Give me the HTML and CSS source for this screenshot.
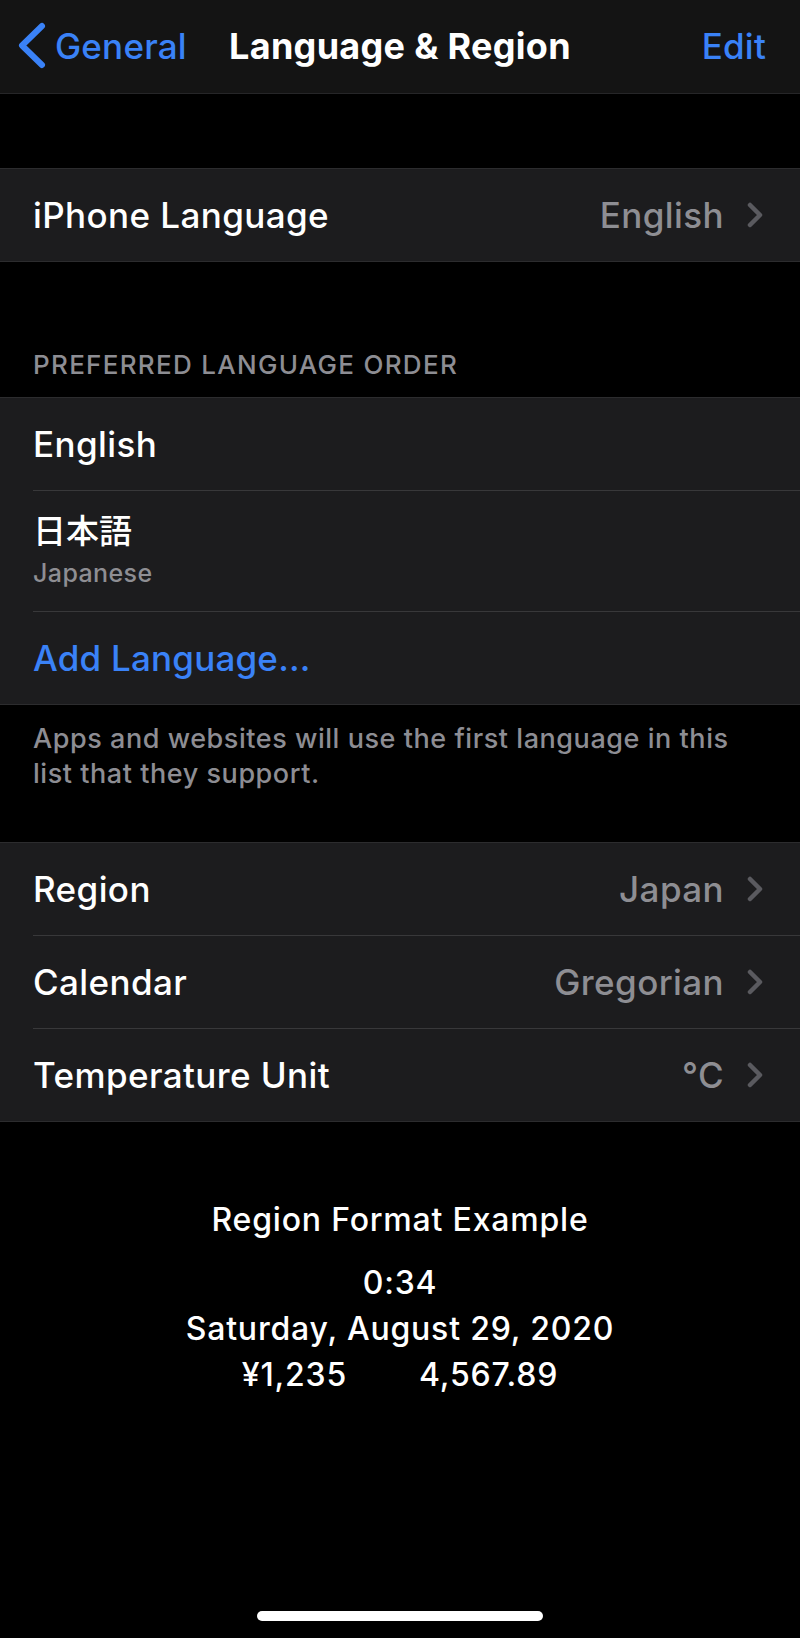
FILE: index.html
```html
<!DOCTYPE html>
<html lang="en">
<head>
<meta charset="utf-8">
<title>Language &amp; Region</title>
<link rel="stylesheet" href="styles.css">
</head>
<body>
<div class="screen">
  <header class="navbar">
    <div class="nav-back">
      <svg class="back-chev" width="30" height="50" viewBox="0 0 30 50"><polyline points="25,5 5,24.5 25,44" fill="none" stroke="#3a82f7" stroke-width="6" stroke-linecap="round" stroke-linejoin="round"/></svg>
      <span class="nav-link">General</span>
    </div>
    <div class="nav-title">Language &amp; Region</div>
    <div class="nav-right"><span class="nav-link">Edit</span></div>
  </header>

  <div class="spacer-top"></div>

  <section class="group">
    <div class="row">
      <span class="label">iPhone Language</span>
      <span class="value">English</span>
      <svg class="chev" width="16" height="26" viewBox="0 0 16 26"><polyline points="3,3 13,13 3,23" fill="none" stroke="#5a5a5f" stroke-width="4.5" stroke-linecap="round" stroke-linejoin="round"/></svg>
    </div>
  </section>

  <div class="section-header">PREFERRED LANGUAGE ORDER</div>

  <section class="group">
    <div class="row"><span class="label">English</span></div>
    <div class="row row-tall">
      <div class="stack">
        <span class="label cjk">日本語</span>
        <span class="sublabel">Japanese</span>
      </div>
    </div>
    <div class="row row-add"><span class="label link">Add Language...</span></div>
  </section>

  <div class="section-footer">Apps and websites will use the first language in this list that they support.</div>

  <section class="group">
    <div class="row">
      <span class="label">Region</span>
      <span class="value">Japan</span>
      <svg class="chev" width="16" height="26" viewBox="0 0 16 26"><polyline points="3,3 13,13 3,23" fill="none" stroke="#5a5a5f" stroke-width="4.5" stroke-linecap="round" stroke-linejoin="round"/></svg>
    </div>
    <div class="row">
      <span class="label">Calendar</span>
      <span class="value">Gregorian</span>
      <svg class="chev" width="16" height="26" viewBox="0 0 16 26"><polyline points="3,3 13,13 3,23" fill="none" stroke="#5a5a5f" stroke-width="4.5" stroke-linecap="round" stroke-linejoin="round"/></svg>
    </div>
    <div class="row">
      <span class="label">Temperature Unit</span>
      <span class="value">°C</span>
      <svg class="chev" width="16" height="26" viewBox="0 0 16 26"><polyline points="3,3 13,13 3,23" fill="none" stroke="#5a5a5f" stroke-width="4.5" stroke-linecap="round" stroke-linejoin="round"/></svg>
    </div>
  </section>

  <div class="example">
    <div class="example-title">Region Format Example</div>
    <div class="example-line ex-time">0:34</div>
    <div class="example-line">Saturday, August 29, 2020</div>
    <div class="example-line ex-money"><span>¥1,235</span><span>4,567.89</span></div>
  </div>

  <div class="home-area"><div class="home-indicator"></div></div>
</div>
</body>
</html>
```

FILE: styles.css
```css
* { box-sizing: border-box; }
html, body {
  margin: 0;
  padding: 0;
  background: #000;
}
body {
  font-family: Inter, "Noto Sans", "Noto Sans CJK JP", sans-serif;
  color: #fff;
}
.screen {
  width: 800px;
  height: 1638px;
  display: flex;
  flex-direction: column;
  background: #000;
}
.navbar {
  height: 94px;
  background: #141414;
  border-bottom: 1px solid #262628;
  display: grid;
  grid-template-columns: 1fr auto 1fr;
  align-items: center;
  padding-bottom: 1px;
}
.nav-back {
  display: flex;
  align-items: center;
  padding-left: 17px;
  gap: 8px;
}
.back-chev { display: block; }
.nav-link {
  color: #3a82f7;
  font-size: 35px;
  font-weight: 500;
  letter-spacing: 0.2px;
}
.nav-title {
  font-size: 36px;
  font-weight: 700;
  letter-spacing: 0.3px;
}
.nav-right {
  display: flex;
  justify-content: flex-end;
  padding-right: 34px;
}
.spacer-top { height: 74px; }
.group {
  background: #1c1c1e;
  border-top: 1px solid #2c2c2e;
  border-bottom: 1px solid #2c2c2e;
}
.row {
  height: 93px;
  display: flex;
  align-items: center;
  margin-left: 33px;
  padding-right: 37px;
  border-top: 1px solid #38383a;
}
.row:first-child { border-top: none; height: 92px; }
.row-tall { height: 121px; padding-bottom: 4px; }
.row-add { height: 93px; }
.label {
  font-size: 35px;
  font-weight: 500;
  letter-spacing: 0.4px;
  flex: 1;
}
.label.link { color: #3a82f7; letter-spacing: 0.2px; }
.stack {
  display: flex;
  flex-direction: column;
}
.cjk {
  font-family: "Noto Sans CJK JP", sans-serif;
  font-size: 33px;
  font-weight: 500;
  letter-spacing: 0;
  line-height: 40px;
  margin-bottom: 8px;
}
.sublabel {
  color: #8e8e93;
  font-size: 25px;
  font-weight: 500;
  letter-spacing: 0.4px;
  line-height: 32px;
}
.value {
  color: #8e8e93;
  font-size: 35px;
  font-weight: 500;
  letter-spacing: 0.4px;
  margin-right: 23px;
}
.chev { display: block; }
.section-header {
  height: 135px;
  display: flex;
  align-items: flex-end;
  padding: 0 33px 16px;
  color: #8d8d93;
  font-size: 26px;
  font-weight: 500;
  letter-spacing: 1.3px;
  line-height: 32px;
}
.section-footer {
  height: 137px;
  padding: 16px 60px 0 33px;
  color: #8d8d93;
  font-size: 27px;
  font-weight: 500;
  letter-spacing: 0.55px;
  line-height: 35px;
}
.example {
  display: flex;
  flex-direction: column;
  align-items: center;
  padding-top: 80px;
}
.example-title {
  font-size: 32px;
  font-weight: 500;
  letter-spacing: 0.8px;
  line-height: 36px;
  margin-bottom: 22px;
}
.example-line {
  font-size: 32px;
  font-weight: 500;
  letter-spacing: 0.8px;
  line-height: 46px;
}
.ex-money {
  display: flex;
  gap: 72px;
}
.home-area {
  flex: 1;
  display: flex;
  align-items: flex-end;
  justify-content: center;
  padding-bottom: 17px;
}
.home-indicator {
  width: 286px;
  height: 10px;
  border-radius: 5px;
  background: #fff;
}
```
